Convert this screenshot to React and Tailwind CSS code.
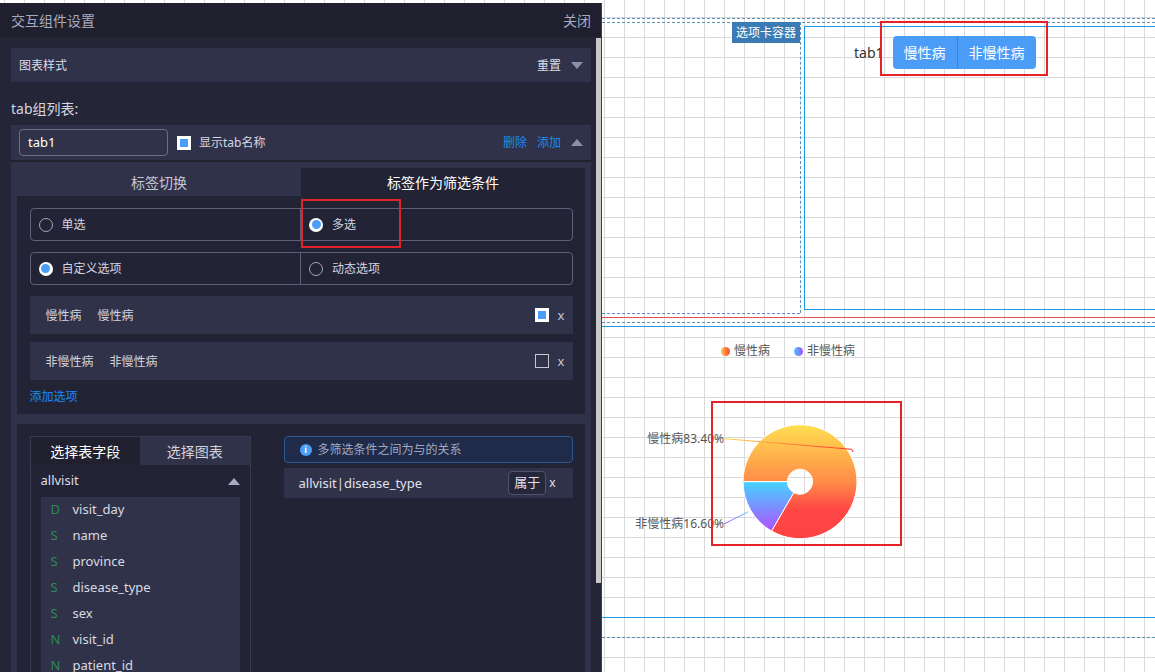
import React from "react";

const fields = [
  ["D", "visit_day"],
  ["S", "name"],
  ["S", "province"],
  ["S", "disease_type"],
  ["S", "sex"],
  ["N", "visit_id"],
  ["N", "patient_id"],
];

const TriDown = () => (
  <span className="w-0 h-0 border-x-[6px] border-x-transparent border-t-[7px] border-t-[#8a90ad]" />
);

const TriUp = ({ color = "border-b-[#8a90ad]" }) => (
  <span className={"w-0 h-0 border-x-[6px] border-x-transparent border-b-[7px] " + color} />
);

const Radio = ({ checked }) =>
  checked ? (
    <span className="w-[14px] h-[14px] shrink-0 rounded-full bg-white flex items-center justify-center">
      <span className="w-[9px] h-[9px] rounded-full bg-[#4a9ef8]" />
    </span>
  ) : (
    <span className="w-[14px] h-[14px] shrink-0 rounded-full border border-[#a4a7b8]" />
  );

const Checkbox = ({ checked }) =>
  checked ? (
    <span className="w-[14px] h-[14px] shrink-0 bg-white p-[3px] flex">
      <span className="flex-1 bg-[#4a9ef8]" />
    </span>
  ) : (
    <span className="w-[14px] h-[14px] shrink-0 border border-[#c4c6d0]" />
  );

const RadioGroup = ({ left, right, leftOn, rightOn }) => (
  <div className="grid grid-cols-2 h-[33px] border border-[#5d6079] rounded-[4px] text-[12px] text-[#d4d6e0]">
    <div className="flex items-center pl-[8px] gap-[9px] border-r border-[#5d6079]">
      <Radio checked={leftOn} />
      <span className="pt-[1px]">{left}</span>
    </div>
    <div className="flex items-center pl-[8px] gap-[9px]">
      <Radio checked={rightOn} />
      <span className="pt-[1px]">{right}</span>
    </div>
  </div>
);

const OptionRow = ({ name, checked, className = "" }) => (
  <div className={"h-[38px] bg-[#30324a] flex items-center pl-[16px] pr-[8px] text-[12px] text-[#d4d6e0] " + className}>
    <span className="pt-[1px]">{name}</span>
    <span className="ml-[16px] pt-[1px]">{name}</span>
    <div className="ml-auto flex items-center gap-[9px]">
      <Checkbox checked={checked} />
      <span className="text-[13px] text-[#c4c6d0] leading-none">x</span>
    </div>
  </div>
);

function Panel() {
  return (
    <div className="mt-[3px] w-[602px] h-[669px] shrink-0 flex flex-col bg-[#252538] border-r border-[#3e3f50]">
      <div className="h-[34px] shrink-0 bg-[#1f1f2d] flex items-center justify-between pl-[11px] pr-[10px] text-[14px] text-[#a4abc4]">
        <span>交互组件设置</span>
        <span>关闭</span>
      </div>
      <div className="flex flex-1 min-h-0">
        <div className="w-[596px] overflow-hidden pl-[11px] pr-[5px]">
          <div className="mt-[11px] h-[34px] bg-[#30324a] flex items-center justify-between px-[8px] text-[12px] text-[#dcdde6]">
            <span className="pt-[1px]">图表样式</span>
            <div className="flex items-center gap-[10px]">
              <span className="pt-[1px]">重置</span>
              <TriDown />
            </div>
          </div>
          <div className="mt-[17px] h-[20px] leading-[20px] text-[14px] text-[#d4d6e0]">tab组列表:</div>

          <div className="mt-[6px] bg-[#30324a] pb-[20px]">
            <div className="h-[37px] flex items-center px-[8px] border-b-2 border-[#22222f] text-[12px] text-[#d4d6e0]">
              <div className="w-[149px] h-[27px] border border-[#6b6f88] rounded-[4px] flex items-center px-[8px] text-[13px] text-white">
                tab1
              </div>
              <span className="ml-[9px]">
                <Checkbox checked />
              </span>
              <span className="ml-[8px] pt-[1px]">显示tab名称</span>
              <div className="ml-auto flex items-center gap-[10px] text-[#1c8af5]">
                <span className="pt-[1px]">删除</span>
                <span className="pt-[1px]">添加</span>
                <TriUp />
              </div>
            </div>

            {/* tab settings */}
            <div className="mx-[6px] mt-[6px] bg-[#232336] pb-[7px]">
              <div className="grid grid-cols-2 h-[28px] text-[14px]">
                <div className="bg-[#30324a] flex items-center justify-center text-[#c5c7d3]">标签切换</div>
                <div className="flex items-center justify-center text-white">标签作为筛选条件</div>
              </div>
              <div className="px-[12.5px]">
                <div className="mt-[12px]">
                  <RadioGroup left="单选" right="多选" rightOn />
                </div>
                <div className="mt-[11px]">
                  <RadioGroup left="自定义选项" right="动态选项" leftOn />
                </div>
                <OptionRow className="mt-[11px]" name="慢性病" checked />
                <OptionRow className="mt-[8px]" name="非慢性病" />
                <div className="mt-[7px] h-[20px] leading-[20px] text-[12px] text-[#1c8af5]">添加选项</div>
              </div>
            </div>

            {/* field selection */}
            <div className="mx-[6px] mt-[10px] bg-[#232336] px-[12.5px] pt-[12px] h-[260px] flex gap-[33px]">
              <div className="w-[221px] border border-[#383a52] border-b-0">
                <div className="grid grid-cols-2 h-[28px] text-[14px]">
                  <div className="bg-[#20202f] flex items-center justify-center text-white">选择表字段</div>
                  <div className="bg-[#30324a] flex items-center justify-center text-[#d0d2dc]">选择图表</div>
                </div>
                <div className="h-[32px] flex items-center justify-between px-[10px] text-[13px] text-[#dcdde6]">
                  <span>allvisit</span>
                  <TriUp color="border-b-[#a8acc0]" />
                </div>
                <div className="mx-[10px] bg-[#30324a] h-[200px]">
                  {fields.map(([t, n], i) => (
                    <div key={i} className="h-[26px] flex items-center pl-[10px] text-[13px]">
                      <span className="w-[22px] text-[#2f8a55]">{t}</span>
                      <span className="text-[#d8dae2]">{n}</span>
                    </div>
                  ))}
                </div>
              </div>
              <div className="w-[289px]">
                <div className="h-[27px] rounded-[4px] border border-[#2c5894] bg-[#1f2b49] flex items-center pl-[15px] gap-[6px] text-[12px] text-[#a3aac2]">
                  <span className="w-[12px] h-[12px] rounded-full bg-[#4a9ef8] flex items-center justify-center text-[9px] font-bold text-white leading-none">
                    i
                  </span>
                  <span className="pt-[1px]">多筛选条件之间为与的关系</span>
                </div>
                <div className="mt-[5px] h-[30px] bg-[#30324a] flex items-center pl-[15px] pr-[17px] text-[13px] text-[#e0e1ea]">
                  <span className="pt-[1px]">allvisit|disease_type</span>
                  <span className="ml-auto w-[38px] h-[24px] border border-[#4f536d] rounded-[4px] bg-[#26273a] flex items-center justify-center">
                    属于
                  </span>
                  <span className="ml-[3px] text-[12px]">x</span>
                </div>
              </div>
            </div>
          </div>
        </div>
        <div className="w-[5px] shrink-0">
          <div className="mt-[1px] h-[545px] bg-[#c9c9c9]" />
        </div>
      </div>
    </div>
  );
}

function PieChart() {
  const cx = 198;
  const cy = 151.7;
  return (
    <svg className="absolute left-0 top-[330px]" width="553" height="290" viewBox="0 0 553 290">
      <defs>
        <linearGradient id="og" gradientUnits="userSpaceOnUse" x1="0" y1={cy - 57} x2="0" y2={cy + 57}>
          <stop offset="0" stopColor="#ffdf50" />
          <stop offset="0.5" stopColor="#ff8c48" />
          <stop offset="0.75" stopColor="#ff4646" />
          <stop offset="1" stopColor="#ff4343" />
        </linearGradient>
        <linearGradient id="bg" gradientUnits="userSpaceOnUse" x1="0" y1={cy} x2="0" y2={cy + 50}>
          <stop offset="0" stopColor="#45d4ff" />
          <stop offset="1" stopColor="#b14dff" />
        </linearGradient>
        <linearGradient id="l1" x1="0" y1="0" x2="1" y2="0">
          <stop offset="0" stopColor="#ffd84d" />
          <stop offset="1" stopColor="#ff2e2e" />
        </linearGradient>
        <linearGradient id="l2" gradientUnits="userSpaceOnUse" x1="122" y1="0" x2="146" y2="0">
          <stop offset="0" stopColor="#a24dff" />
          <stop offset="1" stopColor="#4ad0ff" />
        </linearGradient>
      </defs>
      <path
        d={`M ${cx - 57} ${cy} A 57 57 0 1 1 ${cx - 28.5} ${cy + 49.36} L ${cx - 6.25} ${cy + 10.83} A 12.5 12.5 0 1 0 ${cx - 12.5} ${cy} Z`}
        fill="url(#og)"
        stroke="#fff"
        strokeWidth="1"
      />
      <path
        d={`M ${cx - 28.5} ${cy + 49.36} A 57 57 0 0 1 ${cx - 57} ${cy} L ${cx - 12.5} ${cy} A 12.5 12.5 0 0 0 ${cx - 6.25} ${cy + 10.83} Z`}
        fill="url(#bg)"
        stroke="#fff"
        strokeWidth="1"
      />
      <polyline points="122,108.7 249.7,119.3 251,122" fill="none" stroke="url(#l1)" strokeWidth="1" />
      <polyline points="122,194 146.3,181.7" fill="none" stroke="url(#l2)" strokeWidth="1" />
      <text x="122" y="112.5" textAnchor="end" fontSize="12" fill="#555">
        慢性病83.40%
      </text>
      <text x="122" y="198" textAnchor="end" fontSize="12" fill="#555">
        非慢性病16.60%
      </text>
    </svg>
  );
}

function Canvas() {
  return (
    <div className="relative flex-1 h-full">
      <div className="absolute left-0 right-0 top-[18px] border-t border-dashed border-[#5b93b8]" />
      <div className="absolute left-0 right-0 top-[22px] border-t border-dashed border-[#5b93b8]" />
      <div className="absolute left-[198px] top-[22px] h-[291px] border-l border-dashed border-[#5b93b8]" />
      <div className="absolute left-[130px] top-[22px] w-[68px] h-[21px] bg-[#3b7bb3] text-white text-[12px] flex items-center justify-center">
        选项卡容器
      </div>
      <div className="absolute left-[202px] top-[26px] -right-[10px] h-[284px] border border-[#1b9ce2]" />
      <div className="absolute left-[252px] top-[36px] h-[33px] flex items-center">
        <span className="text-[14px] text-[#333]">tab1</span>
        <div className="ml-[9px] flex h-[33px] rounded-[4px] bg-[#4a9cf6] text-white text-[14px] overflow-hidden">
          <span className="px-[11px] flex items-center border-r border-[#3584de]">慢性病</span>
          <span className="px-[11px] flex items-center">非慢性病</span>
        </div>
      </div>
      <div className="absolute left-[278px] top-[21px] w-[168px] h-[55px] border-2 border-[#e52129]" />
      <div className="absolute left-0 w-[198px] top-[313px] border-t border-dashed border-[#5b93b8]" />
      <div className="absolute left-0 right-0 top-[317px] h-[1px] bg-[#e25555]" />
      <div className="absolute left-0 right-0 top-[322px] border-t border-dashed border-[#5b93b8]" />
      <div className="absolute left-0 right-0 top-[326px] h-[1px] bg-[#1b9ce2]" />
      <div className="absolute left-0 right-0 top-[617px] h-[1px] bg-[#1b9ce2]" />
      <div className="absolute left-0 right-0 top-[637px] border-t border-dashed border-[#5b93b8]" />

      <div className="absolute left-[119px] top-[341px] h-[20px] flex items-center text-[12px] text-[#555]">
        <span className="w-[9px] h-[9px] rounded-full bg-[linear-gradient(to_right,#ffc94d,#ff3b2f)]" />
        <span className="ml-[4px]">慢性病</span>
        <span className="ml-[24px] w-[9px] h-[9px] rounded-full bg-[linear-gradient(to_right,#45c8ff,#a64dff)]" />
        <span className="ml-[4px]">非慢性病</span>
      </div>

      <PieChart />
      <div className="absolute left-[109px] top-[401px] w-[191px] h-[145px] border-2 border-[#e52129]" />
    </div>
  );
}

export default function App() {
  return (
    <div className="relative w-[1155px] h-[672px] overflow-hidden flex bg-white [font-family:'Noto_Sans','Noto_Sans_CJK_SC',sans-serif] [background-image:linear-gradient(to_right,#d9d9d9_1px,transparent_1px),linear-gradient(to_bottom,#d9d9d9_1px,transparent_1px)] [background-size:20px_20px] [background-position:4px_17px]">
      <Panel />
      <Canvas />
      <div className="absolute left-[301px] top-[199px] w-[100px] h-[49px] border-2 border-[#e52129]" />
    </div>
  );
}
